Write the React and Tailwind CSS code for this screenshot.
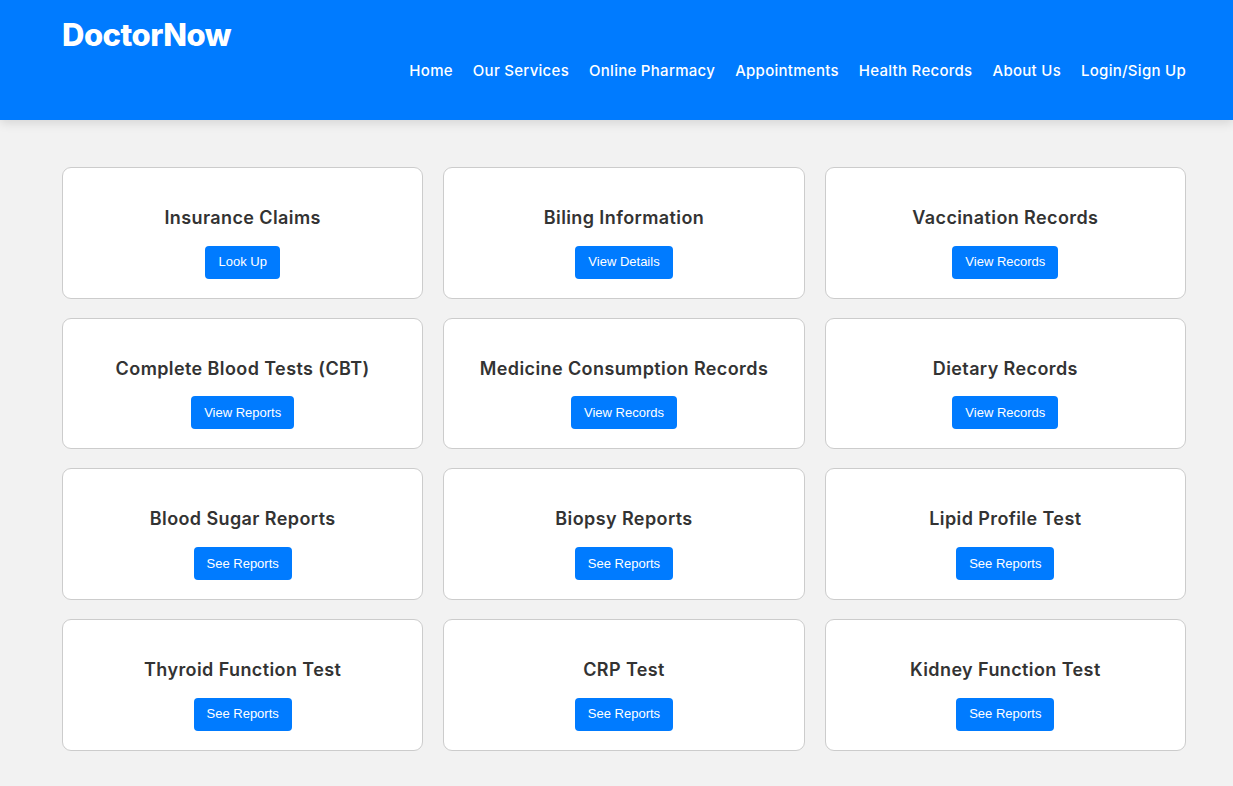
import React from 'react';

export default function App() {
  const navLinks = ['Home', 'Our Services', 'Online Pharmacy', 'Appointments', 'Health Records', 'About Us', 'Login/Sign Up'];

  const records = [
    { title: 'Insurance Claims', action: 'Look Up' },
    { title: 'Biling Information', action: 'View Details' },
    { title: 'Vaccination Records', action: 'View Records' },
    { title: 'Complete Blood Tests (CBT)', action: 'View Reports' },
    { title: 'Medicine Consumption Records', action: 'View Records' },
    { title: 'Dietary Records', action: 'View Records' },
    { title: 'Blood Sugar Reports', action: 'See Reports' },
    { title: 'Biopsy Reports', action: 'See Reports' },
    { title: 'Lipid Profile Test', action: 'See Reports' },
    { title: 'Thyroid Function Test', action: 'See Reports' },
    { title: 'CRP Test', action: 'See Reports' },
    { title: 'Kidney Function Test', action: 'See Reports' }
  ];

  return (
    <div className="min-h-screen bg-[#f2f2f2] font-['Inter',sans-serif]">
      {/* Header */}
      <header className="relative z-10 h-[120px] bg-[#007bff] pl-[62px] pr-[47px] flex justify-between items-start shadow-[0_3px_10px_rgba(0,0,0,0.12)]">
        <h1 className="pt-[15px] text-[31px] font-extrabold tracking-[-0.5px] text-white leading-[40px]">DoctorNow</h1>
        <nav className="pt-[59px] flex gap-[20px]">
          {navLinks.map((link) => (
            <a key={link} href="#" className="text-[15px] font-medium tracking-[0.28px] text-white leading-[24px]">
              {link}
            </a>
          ))}
        </nav>
      </header>

      {/* Records Grid */}
      <main className="pl-[62px] pr-[47px] pt-[47px] pb-[36px]">
        <div className="grid grid-cols-3 gap-x-[20px] gap-y-[19px]">
          {records.map((item) => (
            <div
              key={item.title}
              className="bg-white border border-[#cccccc] rounded-[9px] pt-[37px] pb-[19px] flex flex-col items-center"
            >
              <h3 className="text-[18px] font-semibold tracking-[0.4px] text-[#333333] leading-[26.67px] mb-[14px]">{item.title}</h3>
              <button className="h-[33px] px-[13px] rounded-[4px] bg-[#007bff] text-white text-[13px] font-['Liberation_Sans',Arial,sans-serif]">
                {item.action}
              </button>
            </div>
          ))}
        </div>
      </main>
    </div>
  );
}
